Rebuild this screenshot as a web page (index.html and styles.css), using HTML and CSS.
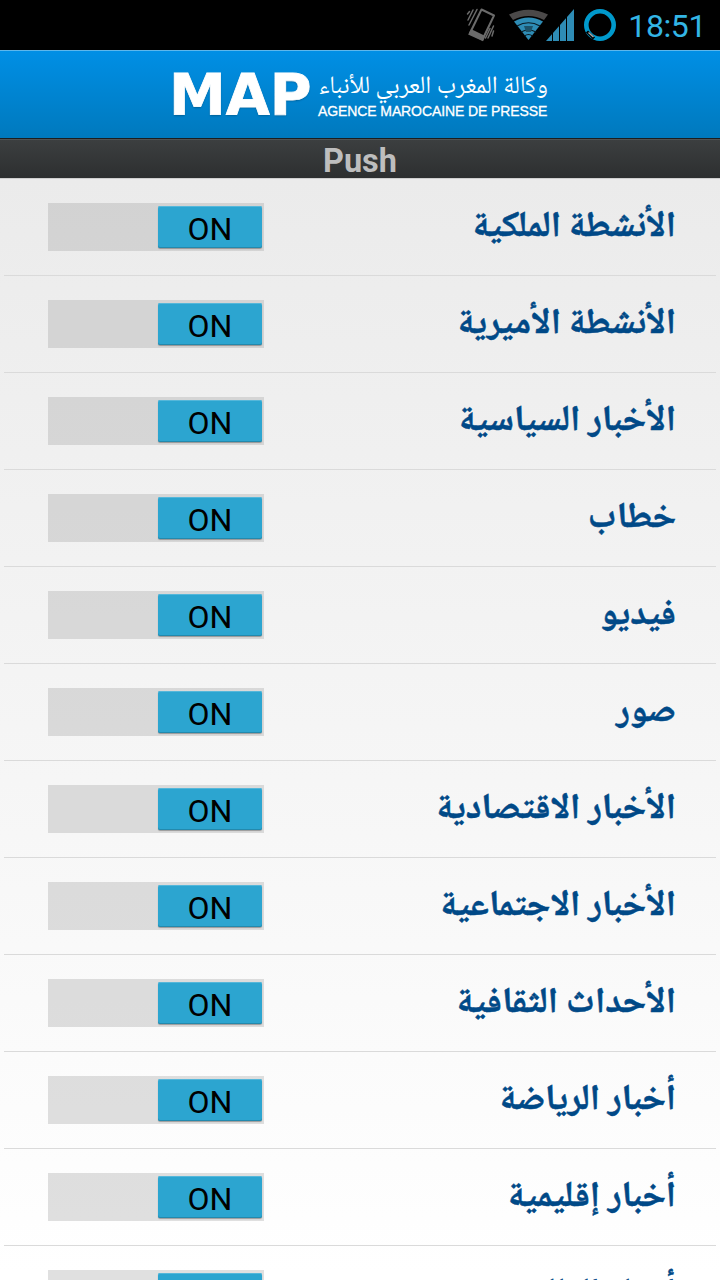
FILE: index.html
```
<!DOCTYPE html>
<html lang="ar">
<head>
  <meta charset="UTF-8" />
  <meta name="viewport" content="width=device-width, initial-scale=1.0"/>
  <title>MAP - Push</title>
  <link rel="stylesheet" href="styles.css">
</head>
<body>
  <div class="status-bar">
    <svg class="status-icons" width="160" height="50" viewBox="0 0 160 50">
      <!-- vibrate -->
      <g fill="none" stroke="#6b6b6b" stroke-linecap="round">
        <path d="M21.5 9.5 L34 15.5 L22.5 39.5 L10 33 Z" stroke-width="2" stroke-linejoin="round"/>
        <path d="M11.5 30.5 L24 36.5 L22.5 40 L9.5 34 Z" fill="#6b6b6b" stroke-width="2"/>
        <path d="M7.5 14 L9.5 11.5 M8 20 L13 10 M9 25 L17 9.5 M33.5 31 L32 36 M33.5 26 L28 38 M30 28.5 L25.5 38" stroke-width="1.5"/>
      </g>
      <!-- wifi -->
      <path d="M49 14.5 Q68.5 5 88 14.5 L84 20 Q68.5 12 53 20 Z" fill="#4b4949"/>
      <path d="M54 21.5 Q68.5 13.5 83 21.5 L68.5 40 Z" fill="#2e8cb5"/>
      <path d="M57 26 Q68.5 19.5 80 26 M61 32 Q68.5 28 76 32 M64.5 36 Q68.5 33 72.5 36" fill="none" stroke="#0a1c26" stroke-width="1.2"/>
      <path d="M64 26 L73 26 L71 32 L66 32 Z" fill="#1c5269"/>
      <!-- signal -->
      <path d="M86 41 L114 9 V41 Z" fill="#2e8cb5"/>
      <path d="M92.5 30 V41 M99.5 22 V41 M106.5 14 V41" stroke="#000" stroke-width="1"/>
      <!-- battery ring -->
      <circle cx="140" cy="25" r="13.7" fill="none" stroke="#0099cc" stroke-width="4.6"/>
      <path d="M127 31.5 L134 38.5" stroke="#000" stroke-width="3"/>
      <path d="M128.5 32.5 L133.5 37" stroke="#aaa" stroke-width="1.5"/>
    </svg>
    <span class="clock">18:51</span>
  </div>

  <div class="header">
    <span class="logo">MAP</span>
    <div class="agency">
      <span class="agency-ar" dir="rtl">وكالة المغرب العربي للأنباء</span>
      <span class="agency-fr">AGENCE MAROCAINE DE PRESSE</span>
    </div>
  </div>
  <div class="title">Push</div>

  <ul class="list">
    <li><div class="toggle"><span>ON</span></div><span class="label">الأنشطة الملكية</span></li>
    <li><div class="toggle"><span>ON</span></div><span class="label">الأنشطة الأميرية</span></li>
    <li><div class="toggle"><span>ON</span></div><span class="label">الأخبار السياسية</span></li>
    <li><div class="toggle"><span>ON</span></div><span class="label">خطاب</span></li>
    <li><div class="toggle"><span>ON</span></div><span class="label">فيديو</span></li>
    <li><div class="toggle"><span>ON</span></div><span class="label">صور</span></li>
    <li><div class="toggle"><span>ON</span></div><span class="label">الأخبار الاقتصادية</span></li>
    <li><div class="toggle"><span>ON</span></div><span class="label">الأخبار الاجتماعية</span></li>
    <li><div class="toggle"><span>ON</span></div><span class="label">الأحداث الثقافية</span></li>
    <li><div class="toggle"><span>ON</span></div><span class="label">أخبار الرياضة</span></li>
    <li><div class="toggle"><span>ON</span></div><span class="label">أخبار إقليمية</span></li>
    <li><div class="toggle"><span>ON</span></div><span class="label">أخبار العالم</span></li>
  </ul>
</body>
</html>
```
FILE: styles.css
```
* {
  box-sizing: border-box;
}

body {
  margin: 0;
  height: 1280px;
  overflow: hidden;
  display: flex;
  flex-direction: column;
  font-family: Roboto, sans-serif;
}

.status-bar {
  height: 50px;
  flex: none;
  background: #000;
  display: flex;
  justify-content: flex-end;
  align-items: center;
  padding-right: 14px;
}

.clock {
  width: 86px;
  text-align: right;
  color: #33b5e5;
  font-size: 32px;
  letter-spacing: -0.4px;
  line-height: 50px;
  padding-top: 1px;
  white-space: nowrap;
}

.header {
  height: 88px;
  flex: none;
  display: flex;
  align-items: center;
  padding-left: 169px;
  background: linear-gradient(#008fe5, #0079bd);
  border-top: 1px solid #5db7ec;
  color: #fff;
}

.logo {
  width: 149px;
  font: bold 57px/86px "DejaVu Sans", sans-serif;
  -webkit-text-stroke: 0.8px #fff;
  text-shadow: 0 1px 2px rgba(0, 0, 0, 0.3);
}

.agency {
  display: flex;
  flex-direction: column;
  width: 230px;
  padding-top: 7px;
}

.agency-ar {
  font: 24.9px/26px "Noto Naskh Arabic", "DejaVu Sans", sans-serif;
  white-space: nowrap;
}

.agency-fr {
  font: 14px/20px "Liberation Sans", sans-serif;
  letter-spacing: -0.1px;
  -webkit-text-stroke: 0.3px #fff;
  white-space: nowrap;
}

.title {
  height: 41px;
  flex: none;
  background: linear-gradient(#3c3f40, #2d2f30);
  border-top: 1px solid #1c1e1f;
  border-bottom: 1px solid #cfcfcf;
  box-shadow: inset 0 1px #505354;
  color: #bebebe;
  text-align: center;
  font-size: 32.5px;
  font-weight: bold;
  line-height: 45px;
}

.list {
  flex: 1;
  margin: 0;
  padding: 0 4px;
  list-style: none;
  background: linear-gradient(#ebebeb, #fff 94%);
}

.list li {
  height: 97px;
  padding: 0 40px 0 44px;
  display: flex;
  align-items: center;
  justify-content: space-between;
  border-bottom: 1px solid #dadada;
}

.toggle {
  width: 216px;
  height: 48px;
  padding: 3px 2px 2px;
  display: flex;
  justify-content: flex-end;
  background: rgba(160, 160, 160, 0.33);
}

.toggle span {
  width: 104px;
  height: 42px;
  border-radius: 2px;
  background: #2ca5d0;
  box-shadow: inset 0 1px #55b7da, inset 0 -1px #2389ad, 0 1px 1px rgba(0, 0, 0, 0.3);
  color: #000;
  font-size: 32px;
  line-height: 46px;
  text-align: center;
}

.label {
  direction: rtl;
  padding-top: 3px;
  color: #004987;
  font: bold 36px/48px "Noto Naskh Arabic", "Droid Arabic Naskh", "Noto Sans", sans-serif;
  -webkit-text-stroke: 0.5px #004987;
  white-space: nowrap;
}
```
